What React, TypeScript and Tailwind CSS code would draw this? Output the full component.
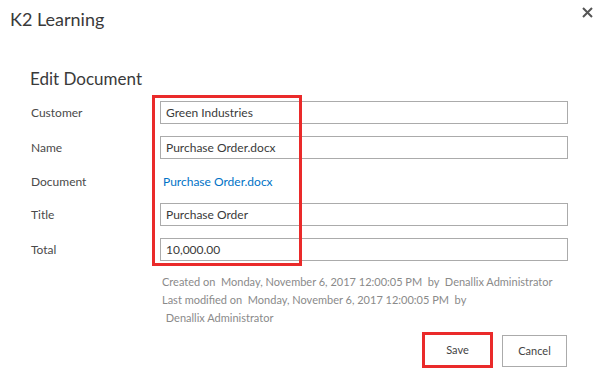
import React from "react";

interface Field {
  label: string;
  value: string;
  kind: "input" | "link";
  top: string;
}

const fields: Field[] = [
  { label: "Customer", value: "Green Industries", kind: "input", top: "mt-0" },
  { label: "Name", value: "Purchase Order.docx", kind: "input", top: "mt-[12px]" },
  { label: "Document", value: "Purchase Order.docx", kind: "link", top: "mt-[11px]" },
  { label: "Title", value: "Purchase Order", kind: "input", top: "mt-[10px]" },
  { label: "Total", value: "10,000.00", kind: "input", top: "mt-[12px]" },
];

const App: React.FC = () => {
  return (
    <div className="relative w-[600px] h-[379px] bg-white font-['Lato','Liberation_Sans',sans-serif] text-[#444] overflow-hidden">
      {/* Header */}
      <div className="flex items-start justify-between pl-[10px] pr-[7px] pt-[6px]">
        <h1 className="text-[18px] leading-[26px] text-[#3a3a3a]">K2 Learning</h1>
        <button type="button" className="mt-[1px] text-[#555]" aria-label="Close">
          <svg width="11" height="11" viewBox="0 0 11 11" className="block">
            <path d="M1 1 L10 10 M10 1 L1 10" stroke="currentColor" strokeWidth="2" />
          </svg>
        </button>
      </div>

      {/* Form */}
      <div className="pl-[30px] pr-[32px] pt-[35px]">
        <h2 className="text-[17px] leading-[24px] text-[#3a3a3a]">Edit Document</h2>

        <div className="mt-[10px] flex flex-col">
          {fields.map((f) => (
            <div key={f.label} className={`flex items-center h-[23px] ${f.top}`}>
              <label className="w-[130px] pl-[1px] text-[12px] text-[#4a4a4a]">{f.label}</label>
              {f.kind === "input" ? (
                <div className="flex-1 h-[23px] border border-[#ababab] flex items-center pl-[5px] text-[12px] text-[#3a3a3a]">
                  {f.value}
                </div>
              ) : (
                <a href="#" className="pl-[3px] text-[12px] text-[#0072c6]">
                  {f.value}
                </a>
              )}
            </div>
          ))}
        </div>

        {/* Meta */}
        <div className="ml-[132px] mt-[12px] text-[11px] leading-[18px] text-[#8a8a8a] whitespace-pre">
          <div>Created on  Monday, November 6, 2017 12:00:05 PM  by  Denallix Administrator</div>
          <div>Last modified on  Monday, November 6, 2017 12:00:05 PM  by</div>
          <div className="pl-[1px]"> Denallix Administrator</div>
        </div>

        {/* Buttons */}
        <div className="mt-[5px] flex items-center justify-end gap-[9px] pr-[1px]">
          <button
            type="button"
            className="w-[71px] h-[36px] border-[3px] border-[#ea2a2a] bg-white text-[11px] text-[#444]"
          >
            Save
          </button>
          <button
            type="button"
            className="mt-[2px] w-[65px] h-[32px] border border-[#ababab] bg-white text-[11px] text-[#444]"
          >
            Cancel
          </button>
        </div>
      </div>

      {/* Annotation box over the inputs */}
      <div className="absolute left-[152px] top-[95px] w-[150px] h-[171px] border-[3px] border-[#ea2a2a] pointer-events-none" />
    </div>
  );
};

export default App;
